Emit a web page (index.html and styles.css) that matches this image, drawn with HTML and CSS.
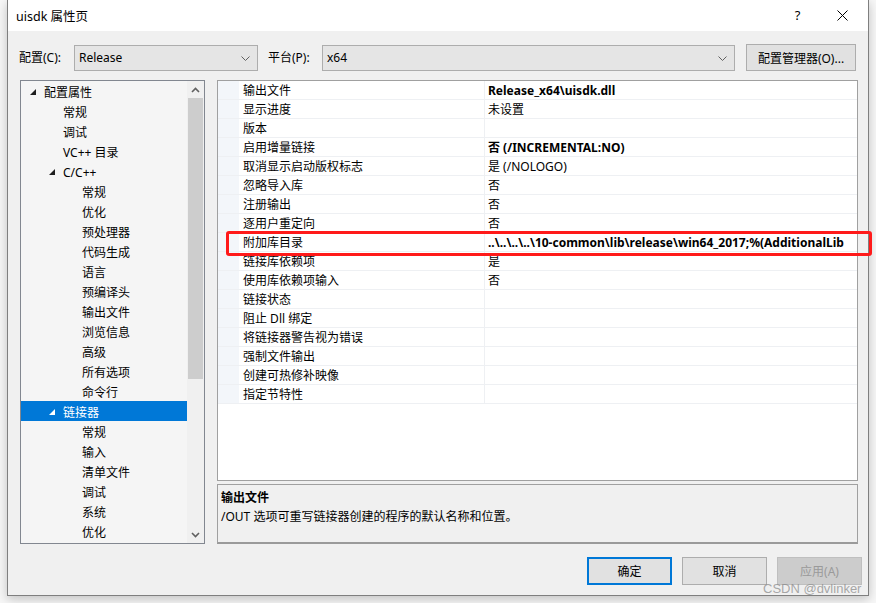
FILE: index.html
```html
<!DOCTYPE html>
<html lang="zh-CN">
<head>
<meta charset="utf-8">
<title>uisdk 属性页</title>
<link rel="stylesheet" href="styles.css">
</head>
<body>
<div class="window">
  <div class="titlebar">
    <span class="title">uisdk 属性页</span>
    <span class="help">?</span>
    <span class="close"><svg width="11" height="11" viewBox="0 0 11 11"><path d="M0.5 0.5L10.5 10.5M10.5 0.5L0.5 10.5" stroke="#000" stroke-width="1"/></svg></span>
  </div>

  <div class="toprow">
    <span class="lbl lbl-config">配置(C):</span>
    <div class="combo combo-config"><span>Release</span><svg class="chev" width="9" height="5" viewBox="0 0 9 5"><path d="M0.5 0.5L4.5 4.5L8.5 0.5" fill="none" stroke="#606060" stroke-width="1"/></svg></div>
    <span class="lbl lbl-platform">平台(P):</span>
    <div class="combo combo-platform"><span>x64</span><svg class="chev" width="9" height="5" viewBox="0 0 9 5"><path d="M0.5 0.5L4.5 4.5L8.5 0.5" fill="none" stroke="#606060" stroke-width="1"/></svg></div>
    <button class="btn btn-mgr">配置管理器(O)...</button>
  </div>

  <div class="main">
    <div class="tree">
      <div class="tree-list">
        <div class="ti l0"><svg class="tri" width="6" height="6" viewBox="0 0 6 6"><path d="M6 0V6H0Z" fill="#1e1e1e"/></svg>配置属性</div>
        <div class="ti l1">常规</div>
        <div class="ti l1">调试</div>
        <div class="ti l1">VC++ 目录</div>
        <div class="ti l1e"><svg class="tri" width="6" height="6" viewBox="0 0 6 6"><path d="M6 0V6H0Z" fill="#1e1e1e"/></svg>C/C++</div>
        <div class="ti l2">常规</div>
        <div class="ti l2">优化</div>
        <div class="ti l2">预处理器</div>
        <div class="ti l2">代码生成</div>
        <div class="ti l2">语言</div>
        <div class="ti l2">预编译头</div>
        <div class="ti l2">输出文件</div>
        <div class="ti l2">浏览信息</div>
        <div class="ti l2">高级</div>
        <div class="ti l2">所有选项</div>
        <div class="ti l2">命令行</div>
        <div class="ti l1e sel"><svg class="tri" width="6" height="6" viewBox="0 0 6 6"><path d="M6 0V6H0Z" fill="#fff"/></svg>链接器</div>
        <div class="ti l2">常规</div>
        <div class="ti l2">输入</div>
        <div class="ti l2">清单文件</div>
        <div class="ti l2">调试</div>
        <div class="ti l2">系统</div>
        <div class="ti l2">优化</div>
      </div>
      <div class="vscroll">
        <div class="arrow"><svg width="9" height="6" viewBox="0 0 9 6"><path d="M1 5L4.5 1.5L8 5" fill="none" stroke="#606060" stroke-width="1.6"/></svg></div>
        <div class="track"><div class="thumb"></div></div>
        <div class="arrow"><svg width="9" height="6" viewBox="0 0 9 6"><path d="M1 1L4.5 4.5L8 1" fill="none" stroke="#606060" stroke-width="1.6"/></svg></div>
      </div>
    </div>

    <div class="rightcol">
      <div class="grid">
        <div class="row"><div class="gut"></div><div class="name">输出文件</div><div class="val b">Release_x64\uisdk.dll</div></div>
        <div class="row"><div class="gut"></div><div class="name">显示进度</div><div class="val">未设置</div></div>
        <div class="row"><div class="gut"></div><div class="name">版本</div><div class="val"></div></div>
        <div class="row"><div class="gut"></div><div class="name">启用增量链接</div><div class="val b">否 (/INCREMENTAL:NO)</div></div>
        <div class="row"><div class="gut"></div><div class="name">取消显示启动版权标志</div><div class="val">是 (/NOLOGO)</div></div>
        <div class="row"><div class="gut"></div><div class="name">忽略导入库</div><div class="val">否</div></div>
        <div class="row"><div class="gut"></div><div class="name">注册输出</div><div class="val">否</div></div>
        <div class="row"><div class="gut"></div><div class="name">逐用户重定向</div><div class="val">否</div></div>
        <div class="row"><div class="gut"></div><div class="name">附加库目录</div><div class="val b">..\..\..\..\10-common\lib\release\win64_2017;%(AdditionalLib</div></div>
        <div class="row"><div class="gut"></div><div class="name">链接库依赖项</div><div class="val">是</div></div>
        <div class="row"><div class="gut"></div><div class="name">使用库依赖项输入</div><div class="val">否</div></div>
        <div class="row"><div class="gut"></div><div class="name">链接状态</div><div class="val"></div></div>
        <div class="row"><div class="gut"></div><div class="name">阻止 Dll 绑定</div><div class="val"></div></div>
        <div class="row"><div class="gut"></div><div class="name">将链接器警告视为错误</div><div class="val"></div></div>
        <div class="row"><div class="gut"></div><div class="name">强制文件输出</div><div class="val"></div></div>
        <div class="row"><div class="gut"></div><div class="name">创建可热修补映像</div><div class="val"></div></div>
        <div class="row"><div class="gut"></div><div class="name">指定节特性</div><div class="val"></div></div>
      </div>
      <div class="desc">
        <div class="desc-title">输出文件</div>
        <div class="desc-text">/OUT 选项可重写链接器创建的程序的默认名称和位置。</div>
      </div>
    </div>
  </div>

  <div class="btnrow">
    <button class="btn btn-dlg btn-ok">确定</button>
    <button class="btn btn-dlg">取消</button>
    <button class="btn btn-dlg btn-dis">应用(A)</button>
  </div>

  <div class="redbox"></div>
  <div class="watermark">CSDN @dvlinker</div>
</div>
</body>
</html>
```
FILE: styles.css
```css
html, body {
  margin: 0;
  padding: 0;
}
body {
  background: #f7f7f7;
  width: 876px;
  height: 603px;
  overflow: hidden;
  font-family: "Noto Sans", "Noto Sans CJK SC", sans-serif;
  font-size: 12px;
  color: #000;
}
.window {
  position: relative;
  box-sizing: border-box;
  width: 862px;
  height: 596px;
  margin-left: 7px;
  border: 1px solid #7f7f7f;
  border-top: none;
  background: #f0f0f0;
  box-shadow: 0 3px 10px rgba(0, 0, 0, 0.22);
  display: flex;
  flex-direction: column;
}
.titlebar {
  height: 31px;
  background: #fff;
  display: flex;
  align-items: center;
  padding-left: 8px;
  flex: none;
}
.title {
  font-size: 12.5px;
  flex: 1;
  margin-top: -1px;
}
.help {
  font-size: 13px;
  width: 45px;
  text-align: center;
  margin-top: -2px;
}
.close {
  width: 45px;
  display: flex;
  justify-content: center;
  margin-right: 3px;
}
.toprow {
  display: flex;
  align-items: center;
  height: 27px;
  margin-top: 13px;
  padding-left: 11px;
}
.lbl {
  line-height: 16px;
}
.lbl-config { width: 55px; }
.lbl-platform { width: 54px; margin-left: 10px; }
.combo {
  box-sizing: border-box;
  height: 26px;
  background: #e5e5e5;
  border: 1px solid #adadad;
  display: flex;
  align-items: center;
  justify-content: space-between;
  padding: 0 7px 0 4px;
}
.combo-config { width: 184px; }
.combo-platform { width: 413px; }
.chev { margin-top: 1px; }
.btn {
  box-sizing: border-box;
  font-family: inherit;
  font-size: 12px;
  color: #000;
  background: #e1e1e1;
  border: 1px solid #adadad;
  padding: 0;
  margin: 0;
}
.btn-mgr {
  width: 110px;
  height: 27px;
  margin-left: 11px;
}
.main {
  display: flex;
  margin-top: 9px;
  padding-left: 12px;
  height: 464px;
  gap: 12px;
}
.tree {
  box-sizing: border-box;
  width: 185px;
  height: 464px;
  border: 1px solid #828790;
  background: #f5f5f5;
  display: flex;
}
.tree-list {
  flex: 1;
  overflow: hidden;
}
.ti {
  box-sizing: border-box;
  height: 20px;
  padding-top: 2px;
  white-space: nowrap;
  display: flex;
  align-items: center;
}
.ti.l0 { padding-left: 9px; }
.ti.l1 { padding-left: 42px; }
.ti.l1e { padding-left: 28px; }
.ti.l2 { padding-left: 61px; }
.tri {
  margin-right: 8px;
  margin-top: -1px;
}
.ti.sel {
  background: #0078d7;
  color: #fff;
}
.vscroll {
  width: 17px;
  background: #f0f0f0;
  display: flex;
  flex-direction: column;
}
.arrow {
  height: 17px;
  display: flex;
  align-items: center;
  justify-content: center;
  flex: none;
}
.track {
  flex: 1;
}
.thumb {
  height: 281px;
  margin: 0 1px 0 1px;
  background: #cdcdcd;
}
.rightcol {
  width: 641px;
  display: flex;
  flex-direction: column;
  gap: 3px;
}
.grid {
  box-sizing: border-box;
  height: 402px;
  border: 1px solid #a0a0a0;
  background: #fff;
  overflow: hidden;
}
.row {
  display: flex;
  height: 19px;
  box-sizing: border-box;
  border-bottom: 1px solid #eef0f3;
}
.gut {
  width: 21px;
  background: #f3f6fa;
  flex: none;
}
.name {
  width: 241px;
  padding-left: 4px;
  padding-top: 2px;
  line-height: 16px;
  border-right: 1px solid #eef0f3;
  flex: none;
  white-space: nowrap;
}
.val {
  flex: 1;
  padding-left: 3px;
  padding-top: 2px;
  line-height: 16px;
  white-space: nowrap;
  overflow: hidden;
}
.val.b { font-weight: bold; }
.desc {
  box-sizing: border-box;
  height: 60px;
  border: 1px solid #a0a0a0;
  border-bottom: 2px solid #9a9a9a;
  background: #f0f0f0;
  padding: 3px 3px;
}
.desc-title {
  font-weight: bold;
  line-height: 19px;
}
.desc-text {
  line-height: 20px;
}
.btnrow {
  display: flex;
  justify-content: flex-end;
  gap: 10px;
  margin-top: 13px;
  padding-right: 6px;
}
.btn-dlg {
  width: 85px;
  height: 28px;
}
.btn-ok {
  border: 2px solid #0078d7;
}
.btn-dis {
  background: #cccccc;
  border-color: #bfbfbf;
  color: #9a9a9a;
}
.redbox {
  position: absolute;
  left: 218px;
  top: 231px;
  width: 646px;
  height: 25px;
  box-sizing: border-box;
  border: 3px solid #ff1a1a;
  border-radius: 3px;
}
.watermark {
  position: absolute;
  left: 755px;
  top: 581px;
  font-family: "Liberation Sans", sans-serif;
  font-size: 13px;
  color: rgba(140, 140, 140, 0.75);
}
```
